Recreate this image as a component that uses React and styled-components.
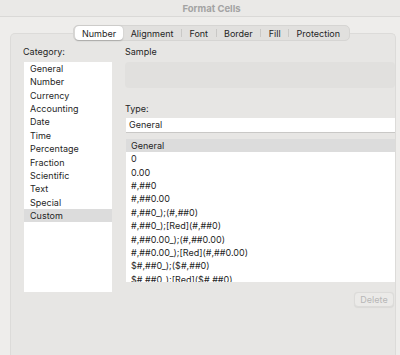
import React from "react";
import styled, { createGlobalStyle } from "styled-components";

const GlobalStyle = createGlobalStyle`
  html, body {
    margin: 0;
    padding: 0;
    background: #eeedeb;
  }
  body {
    font-family: Inter, "Noto Sans", "Liberation Sans", sans-serif;
    -webkit-font-smoothing: antialiased;
  }
`;

const Window = styled.div`
  width: 400px;
  height: 355px;
  background: #eeedeb;
  overflow: hidden;
  display: flex;
  flex-direction: column;
`;

const TitleBar = styled.div`
  height: 16px;
  flex: none;
  display: flex;
  align-items: center;
  justify-content: center;
  padding-left: 23px;
  background: #eae9e7;
  border-bottom: 1px solid #dad9d7;
  color: #a3a3a3;
  font-size: 9.5px;
  font-weight: 700;
`;

const TabRow = styled.div`
  position: relative;
  z-index: 1;
  flex: none;
  margin-top: 8px;
  padding-left: 73px;
  display: flex;
`;

const Segmented = styled.div`
  display: flex;
  align-items: center;
  height: 16px;
  box-sizing: border-box;
  padding: 1px;
  background: #e1e0de;
  border: 0.5px solid #d6d5d3;
  border-radius: 5px;
`;

const Tab = styled.div`
  height: 14px;
  display: flex;
  align-items: center;
  padding: 0 ${(p) => (p.$active ? "7px" : "7.5px")};
  font-size: 9px;
  color: #1f1f1f;
  border-radius: 4px;
  background: ${(p) => (p.$active ? "#ffffff" : "transparent")};
  box-shadow: ${(p) =>
    p.$active ? "0 0.5px 1.5px rgba(0,0,0,0.22)" : "none"};
`;

const Divider = styled.span`
  width: 1px;
  height: 8px;
  background: #c9c8c6;
`;

const Panel = styled.div`
  flex: 1;
  margin: -8px 4px 0 10px;
  padding: 11px 0 0 13px;
  background: #e7e6e4;
  border: 1px solid #dcdbd9;
  border-bottom: none;
  border-radius: 5px 5px 0 0;
  display: grid;
  grid-template-columns: 88px 270px;
  column-gap: 13px;
  align-items: start;
`;

const Column = styled.div`
  display: flex;
  flex-direction: column;
`;

const Label = styled.div`
  height: 13px;
  line-height: 13px;
  font-size: 9px;
  color: #1f1f1f;
  margin: ${(p) => p.$top || 0}px 0 ${(p) => p.$bottom || 4}px
    ${(p) => p.$left || 0}px;
`;

const List = styled.div`
  background: #ffffff;
  height: ${(p) => p.$height}px;
  margin-left: ${(p) => p.$indent || 0}px;
  overflow: hidden;
`;

const Row = styled.div`
  height: 13.36px;
  line-height: 13.36px;
  padding-left: ${(p) => p.$pad}px;
  font-size: 9px;
  color: #1f1f1f;
  white-space: nowrap;
  background: ${(p) => (p.$selected ? "#dcdcdc" : "transparent")};
`;

const SampleBox = styled.div`
  height: 26px;
  background: #e1e0de;
  border-radius: 4px;
`;

const Input = styled.div`
  height: 14px;
  line-height: 14px;
  margin-left: 1px;
  margin-bottom: 6px;
  padding-left: 3px;
  background: #ffffff;
  border-bottom: 1px solid #c9c8c6;
  font-size: 9px;
  color: #1f1f1f;
`;

const ButtonRow = styled.div`
  display: flex;
  justify-content: flex-end;
  margin-top: 10px;
  padding-right: 1px;
`;

const Button = styled.div`
  width: 40px;
  height: 15px;
  box-sizing: border-box;
  display: flex;
  align-items: center;
  justify-content: center;
  background: #ebeae8;
  border: 0.5px solid #dcdbd9;
  border-radius: 4px;
  box-shadow: 0 0.5px 1px rgba(0, 0, 0, 0.06);
  color: #b7b7b7;
  font-size: 9px;
`;

const tabs = ["Number", "Alignment", "Font", "Border", "Fill", "Protection"];

const categories = [
  "General",
  "Number",
  "Currency",
  "Accounting",
  "Date",
  "Time",
  "Percentage",
  "Fraction",
  "Scientific",
  "Text",
  "Special",
  "Custom",
];

const types = [
  "General",
  "0",
  "0.00",
  "#,##0",
  "#,##0.00",
  "#,##0_);(#,##0)",
  "#,##0_);[Red](#,##0)",
  "#,##0.00_);(#,##0.00)",
  "#,##0.00_);[Red](#,##0.00)",
  "$#,##0_);($#,##0)",
  "$#,##0_);[Red]($#,##0)",
];

export default function App() {
  return (
    <>
      <GlobalStyle />
      <Window>
        <TitleBar>Format Cells</TitleBar>
        <TabRow>
          <Segmented>
            {tabs.map((t, i) => (
              <React.Fragment key={t}>
                {i > 1 && <Divider />}
                <Tab $active={i === 0}>{t}</Tab>
              </React.Fragment>
            ))}
          </Segmented>
        </TabRow>
        <Panel>
          <Column>
            <Label $left={-1}>Category:</Label>
            <List $height={230}>
              {categories.map((c) => (
                <Row key={c} $pad={6} $selected={c === "Custom"}>
                  {c}
                </Row>
              ))}
            </List>
          </Column>
          <Column>
            <Label>Sample</Label>
            <SampleBox />
            <Label $top={14} $bottom={3}>
              Type:
            </Label>
            <Input>General</Input>
            <List $height={143} $indent={1}>
              {types.map((t, i) => (
                <Row key={t} $pad={5} $selected={i === 0}>
                  {t}
                </Row>
              ))}
            </List>
            <ButtonRow>
              <Button>Delete</Button>
            </ButtonRow>
          </Column>
        </Panel>
      </Window>
    </>
  );
}
